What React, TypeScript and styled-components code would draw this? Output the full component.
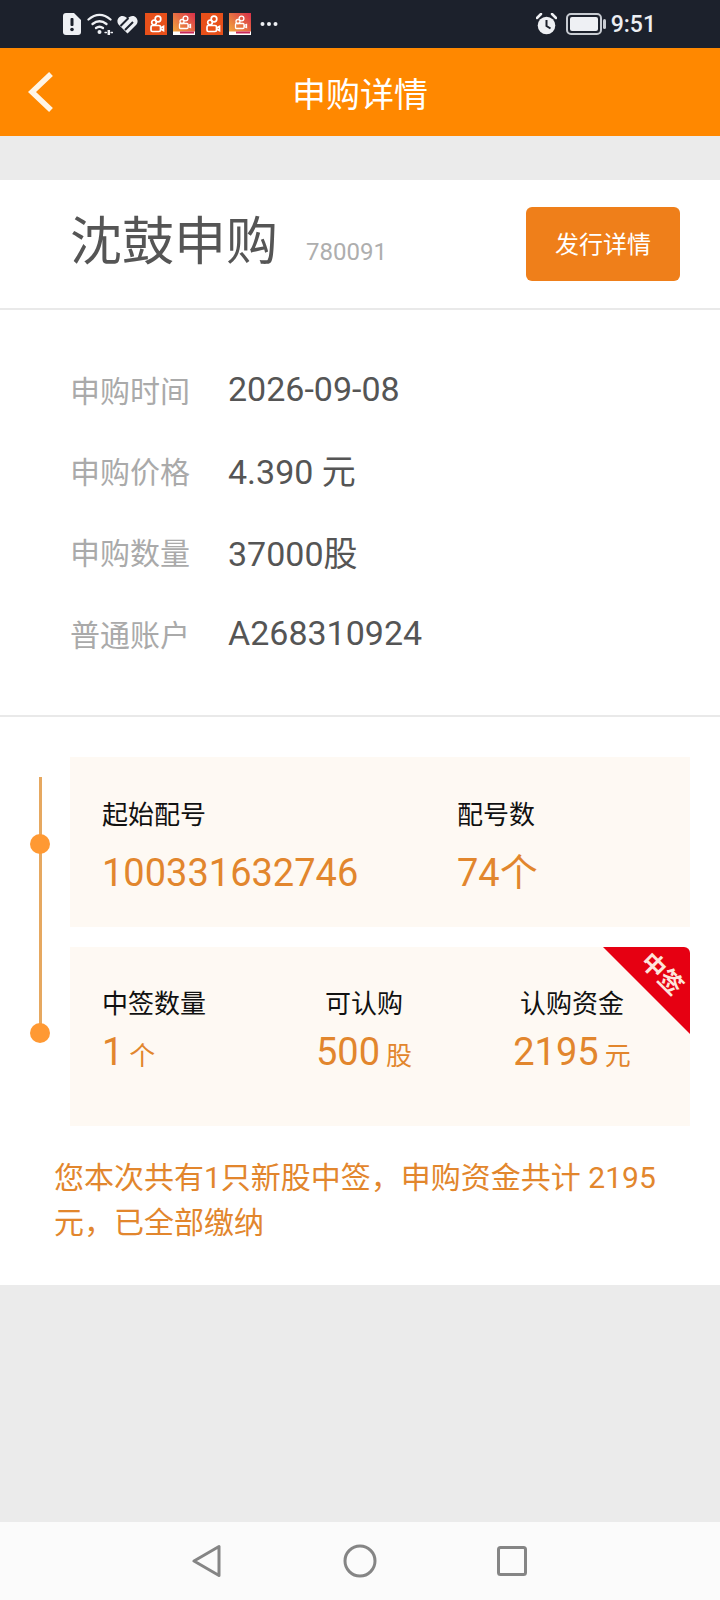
import React from "react";
import styled, { createGlobalStyle } from "styled-components";

const Global = createGlobalStyle`
  html, body { margin: 0; padding: 0; background: #ebebeb; }
  body { font-family: Roboto, "Noto Sans CJK SC", sans-serif; }
`;

const Page = styled.div`
  width: 720px;
  height: 1600px;
  display: flex;
  flex-direction: column;
  background: #ebebeb;
  overflow: hidden;
`;

const StatusBar = styled.div`
  height: 48px;
  flex: none;
  display: flex;
  align-items: center;
  justify-content: space-between;
  padding: 0 64px 0 63px;
  background: #1c212c;
  color: #eceef2;
`;
const StatusGroup = styled.div`
  display: flex;
  align-items: center;
`;
const StatusIcon = styled.svg<{ $gap?: number }>`
  flex: none;
  display: block;
  margin-right: ${(p) => p.$gap ?? 0}px;
`;
const Clock = styled.span`
  font-size: 23px;
  font-weight: 500;
`;

const Header = styled.header`
  height: 88px;
  flex: none;
  position: relative;
  display: flex;
  align-items: center;
  justify-content: center;
  padding-top: 1px;
  box-sizing: border-box;
  background: #ff8800;
  color: #fff;
  font-size: 34px;
`;
const BackIcon = styled.svg`
  position: absolute;
  left: 26px;
  top: 22px;
`;

const Card = styled.main`
  margin-top: 44px;
  background: #fff;
  height: 1105px;
  flex: none;
  display: flex;
  flex-direction: column;
`;

const TitleRow = styled.section`
  height: 130px;
  flex: none;
  box-sizing: border-box;
  display: flex;
  align-items: center;
  justify-content: space-between;
  padding: 0 40px 0 70px;
  border-bottom: 2px solid #e9e9e9;
`;
const TitleText = styled.div`
  display: flex;
  align-items: baseline;
  gap: 28px;
  padding-bottom: 2px;
`;
const Title = styled.h1`
  margin: 0;
  font-size: 52px;
  font-weight: 400;
  line-height: 60px;
  color: #555;
`;
const Code = styled.span`
  font-size: 24px;
  color: #aeaeae;
`;
const DetailButton = styled.button`
  width: 154px;
  height: 74px;
  border: 0;
  padding: 0 0 3px;
  border-radius: 6px;
  background: #ef7f1a;
  color: #fff;
  font: 24px Roboto, "Noto Sans CJK SC", sans-serif;
`;

const InfoList = styled.dl`
  margin: 0;
  height: 407px;
  flex: none;
  box-sizing: border-box;
  padding: 38px 0 0 71px;
  border-bottom: 2px solid #e9e9e9;
`;
const InfoRow = styled.div`
  height: 81.3px;
  display: flex;
  align-items: center;
`;
const InfoLabel = styled.dt`
  width: 157px;
  margin-left: -1px;
  margin-right: 1px;
  font-size: 30px;
  color: #aaa;
`;
const InfoValue = styled.dd`
  margin: 0;
  font-size: 34px;
  color: #555;
`;

const Timeline = styled.section`
  position: relative;
  display: flex;
  flex-direction: column;
  gap: 20px;
  padding: 40px 30px 0 30px;
  &::before {
    content: "";
    position: absolute;
    left: 38.5px;
    top: 60px;
    width: 3px;
    height: 255px;
    background: #e6a860;
  }
`;
const TimelineRow = styled.div`
  display: flex;
  align-items: flex-start;
  gap: 20px;
`;
const Dot = styled.span<{ $top: number }>`
  flex: none;
  width: 20px;
  height: 20px;
  margin-top: ${(p) => p.$top}px;
  border-radius: 50%;
  background: #ff9933;
  position: relative;
`;
const Panel = styled.div<{ $height: number }>`
  position: relative;
  flex: 1;
  height: ${(p) => p.$height}px;
  box-sizing: border-box;
  background: #fef9f3;
  overflow: hidden;
`;
const StartPanel = styled(Panel)`
  display: grid;
  grid-template-columns: 355px 1fr;
  padding: 40px 0 0 32px;
`;
const ResultPanel = styled(Panel)`
  display: grid;
  grid-template-columns: 190px 208px 208px;
  padding: 39px 0 0 0;
  border-top-right-radius: 6px;
`;
const Field = styled.div`
  display: flex;
  flex-direction: column;
`;
const CenterField = styled(Field)<{ $left?: number }>`
  align-items: ${(p) => (p.$left ? "flex-start" : "center")};
  padding-left: ${(p) => p.$left ?? 0}px;
`;
const FieldLabel = styled.span`
  font-size: 26px;
  line-height: 36px;
  color: #111;
`;
const BigValue = styled.span`
  margin-top: 14px;
  font-size: 38px;
  line-height: 52px;
  color: #e2862d;
`;
const ResultValue = styled.span`
  margin-top: 6px;
  font-size: 38px;
  line-height: 48px;
  color: #e2862d;
`;
const Unit = styled.small`
  font-size: 26px;
  margin-left: 6px;
`;
const Ribbon = styled.div`
  position: absolute;
  top: 0;
  right: 0;
  width: 87px;
  height: 87px;
  background: #e60012;
  clip-path: polygon(0 0, 100% 0, 100% 100%);
`;
const RibbonText = styled.span`
  position: absolute;
  top: 12px;
  left: 34px;
  width: 50px;
  text-align: center;
  white-space: nowrap;
  transform: rotate(45deg);
  font-size: 24px;
  line-height: 30px;
  font-weight: 700;
  color: #fde4dc;
`;

const Summary = styled.p`
  margin: 29px 40px 0 54px;
  font-size: 30px;
  line-height: 45px;
  color: #e2862d;
`;

const Spacer = styled.div`
  flex: 1;
`;
const NavBar = styled.nav`
  height: 78px;
  flex: none;
  display: flex;
  align-items: center;
  justify-content: center;
  gap: 120px;
  background: #fbfbfb;
`;
const BackKey = styled.svg`
  margin-left: -1px;
`;

const KwaiPlain = ({ gap }: { gap: number }) => (
  <StatusIcon $gap={gap} width="22" height="22" viewBox="0 0 22 22">
    <rect width="22" height="22" fill="#e8501a" />
    <g fill="none" stroke="#fff" strokeWidth="1.7">
      <circle cx="13" cy="6" r="2.800" />
      <circle cx="9" cy="9.500" r="2.300" />
      <rect x="6" y="12.500" width="9.500" height="6" rx="1.500" />
      <path d="M15.500 15l3-1.500v4l-3-1.500" />
    </g>
  </StatusIcon>
);
const KwaiGradient = ({ id, gap }: { id: string; gap: number }) => (
  <StatusIcon $gap={gap} width="22" height="22" viewBox="0 0 22 22">
    <defs>
      <linearGradient id={id} x1="0" y1="1" x2="1" y2="0">
        <stop offset="0" stopColor="#f4b13c" />
        <stop offset="1" stopColor="#d92f4a" />
      </linearGradient>
    </defs>
    <rect width="22" height="22" fill={`url(#${id})`} />
    <g fill="none" stroke="#fff" strokeWidth="1.300">
      <circle cx="12.500" cy="5.500" r="2.400" />
      <circle cx="9" cy="8.500" r="2" />
      <rect x="6.500" y="10.500" width="8.500" height="5" rx="1" />
      <path d="M15 12.500l2.500-1v3l-2.500-1" />
    </g>
    <rect y="18.500" width="22" height="3.500" fill="#fff" />
    <rect x="7" y="18.500" width="14" height="2" fill="#c9285a" />
  </StatusIcon>
);

const StatusLeft = () => (
  <StatusGroup>
    <StatusIcon $gap={6} width="18" height="22" viewBox="0 0 18 22">
      <path d="M3 0h8l7 7v12a3 3 0 0 1-3 3H3a3 3 0 0 1-3-3V3a3 3 0 0 1 3-3z" fill="#eef0f4" />
      <rect x="7.500" y="5" width="3" height="8" rx="1" fill="#1c212c" />
      <circle cx="9" cy="16.500" r="1.800" fill="#1c212c" />
    </StatusIcon>
    <StatusIcon $gap={4} width="26" height="22" viewBox="0 0 26 22" fill="none" stroke="#eef0f4" strokeWidth="2.300" strokeLinecap="round">
      <path d="M1.500 6.500c7-6 15-6 22 0" />
      <path d="M5.500 11c4.500-3.500 9.500-3.500 14 0" />
      <path d="M9 15c2.500-1.800 4.500-1.800 7 0" />
      <circle cx="12.500" cy="19" r="2" fill="#eef0f4" stroke="none" />
      <path d="M18 19.500h1.500M24 19.500h1.500" strokeWidth="1.300" />
      <path d="M21.800 17v5" strokeWidth="2.500" strokeLinecap="butt" />
    </StatusIcon>
    <StatusIcon $gap={7} width="21" height="19" viewBox="0 0 21 19">
      <path d="M10.500 18.500L1.500 9.500C-1 6.500 1 1 5.500 1c2 0 3.500 1 5 2.500C12 2 13.500 1 15.500 1c4.500 0 6.500 5.500 4 8.500z" fill="#eef0f4" />
      <path d="M3.500 11l8-8M8 15l8-8" stroke="#1c212c" strokeWidth="2" fill="none" />
    </StatusIcon>
    <KwaiPlain gap={6} />
    <KwaiGradient id="kwA" gap={6} />
    <KwaiPlain gap={6} />
    <KwaiGradient id="kwB" gap={9} />
    <StatusIcon width="18" height="6" viewBox="0 0 18 6" fill="#eef0f4">
      <circle cx="2.500" cy="3" r="2" />
      <circle cx="9" cy="3" r="2" />
      <circle cx="15.500" cy="3" r="2" />
    </StatusIcon>
  </StatusGroup>
);

const StatusRight = () => (
  <StatusGroup>
    <StatusIcon $gap={9} width="21" height="22" viewBox="0 0 21 22">
      <circle cx="10.500" cy="12.500" r="8.800" fill="#eef0f4" />
      <path d="M10.500 7v6l4 2.500" fill="none" stroke="#1c212c" strokeWidth="2" />
      <path d="M1 5l4-4M20 5l-4-4" stroke="#eef0f4" strokeWidth="2.500" strokeLinecap="round" />
    </StatusIcon>
    <StatusIcon $gap={5} width="40" height="22" viewBox="0 0 40 22">
      <rect x="1" y="1" width="34" height="20" rx="4" fill="none" stroke="#c8ccd2" strokeWidth="2" />
      <rect x="4" y="4" width="28" height="14" rx="2" fill="#eef0f4" />
      <rect x="37" y="6" width="3" height="10" rx="1.500" fill="#c8ccd2" />
    </StatusIcon>
    <Clock>9:51</Clock>
  </StatusGroup>
);

const info = [
  ["申购时间", "2026-09-08"],
  ["申购价格", "4.390 元"],
  ["申购数量", "37000股"],
  ["普通账户", "A268310924"],
];

export default function App() {
  return (
    <Page>
      <Global />
      <StatusBar>
        <StatusLeft />
        <StatusRight />
      </StatusBar>
      <Header>
        <BackIcon width="30" height="44" viewBox="0 0 30 44">
          <path d="M25 4L6 22l19 18" fill="none" stroke="#fff5e6" strokeWidth="5.500" />
        </BackIcon>
        申购详情
      </Header>
      <Card>
        <TitleRow>
          <TitleText>
            <Title>沈鼓申购</Title>
            <Code>780091</Code>
          </TitleText>
          <DetailButton>发行详情</DetailButton>
        </TitleRow>
        <InfoList>
          {info.map(([label, value]) => (
            <InfoRow key={label}>
              <InfoLabel>{label}</InfoLabel>
              <InfoValue>{value}</InfoValue>
            </InfoRow>
          ))}
        </InfoList>
        <Timeline>
          <TimelineRow>
            <Dot $top={77} />
            <StartPanel $height={170}>
              <Field>
                <FieldLabel>起始配号</FieldLabel>
                <BigValue>100331632746</BigValue>
              </Field>
              <Field>
                <FieldLabel>配号数</FieldLabel>
                <BigValue>74个</BigValue>
              </Field>
            </StartPanel>
          </TimelineRow>
          <TimelineRow>
            <Dot $top={76} />
            <ResultPanel $height={179}>
              <CenterField $left={32}>
                <FieldLabel>中签数量</FieldLabel>
                <ResultValue>
                  1<Unit>个</Unit>
                </ResultValue>
              </CenterField>
              <CenterField>
                <FieldLabel>可认购</FieldLabel>
                <ResultValue>
                  500<Unit>股</Unit>
                </ResultValue>
              </CenterField>
              <CenterField>
                <FieldLabel>认购资金</FieldLabel>
                <ResultValue>
                  2195<Unit>元</Unit>
                </ResultValue>
              </CenterField>
              <Ribbon>
                <RibbonText>中签</RibbonText>
              </Ribbon>
            </ResultPanel>
          </TimelineRow>
        </Timeline>
        <Summary>您本次共有1只新股中签，申购资金共计 2195 元，已全部缴纳</Summary>
      </Card>
      <Spacer />
      <NavBar>
        <BackKey width="31" height="34" viewBox="0 0 31 34">
          <path d="M2 17L27 2.500v29z" fill="none" stroke="#858585" strokeWidth="3" strokeLinejoin="round" />
        </BackKey>
        <svg width="34" height="34" viewBox="0 0 34 34">
          <circle cx="17" cy="17" r="15" fill="none" stroke="#858585" strokeWidth="3" />
        </svg>
        <svg width="30" height="30" viewBox="0 0 30 30">
          <rect x="1.500" y="1.500" width="27" height="27" rx="2" fill="none" stroke="#858585" strokeWidth="3" />
        </svg>
      </NavBar>
    </Page>
  );
}
